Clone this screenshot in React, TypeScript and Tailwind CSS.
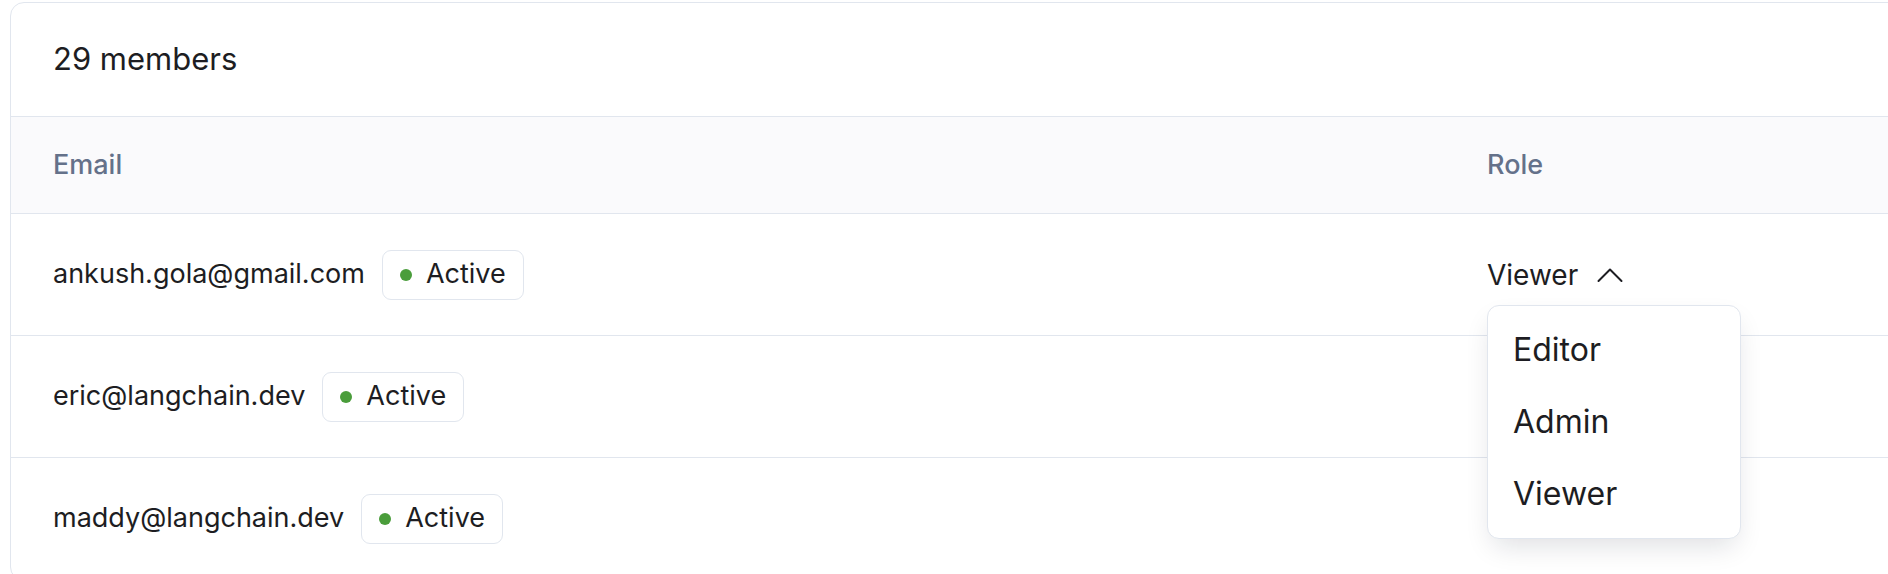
import { useState } from "react";

type Member = { email: string; status: "Active"; role: string };

const members: Member[] = [
  { email: "ankush.gola@gmail.com", status: "Active", role: "Viewer" },
  { email: "eric@langchain.dev", status: "Active", role: "Viewer" },
  { email: "maddy@langchain.dev", status: "Active", role: "Viewer" },
];

const roles = ["Editor", "Admin", "Viewer"];

function ChevronUp() {
  return (
    <svg width="26" height="16" viewBox="0 0 26 16" fill="none" className="text-[#1d1d22]">
      <polyline
        points="1.5,14 13,2.5 24.5,14"
        stroke="currentColor"
        strokeWidth="2"
        strokeLinecap="round"
        strokeLinejoin="round"
      />
    </svg>
  );
}

function StatusBadge({ label }: { label: string }) {
  return (
    <span className="inline-flex h-[50px] items-center gap-[14px] rounded-[9px] border-[1.5px] border-[#e1e6ee] pl-[17px] pr-[17px]">
      <span className="h-[12px] w-[12px] rounded-full bg-[#4a9d3b]" />
      <span>{label}</span>
    </span>
  );
}

/** Role cell: trigger + open menu. Rows under the open menu are hidden by it. */
function RoleSelect({ value, open }: { value: string; open: boolean }) {
  const [role] = useState(value);
  return (
    <div className="relative">
      <button type="button" className="flex items-center gap-[19px] text-[28px]">
        <span>{role}</span>
        {open && <ChevronUp />}
      </button>
      {open && (
        <div className="absolute left-0 top-[51px] z-10 w-[254px] rounded-[12px] border-[1.5px] border-[#e1e6ee] bg-white py-[8px] shadow-[0_12px_28px_-6px_rgba(15,23,42,0.14)]">
          {roles.map((r) => (
            <div key={r} className="flex h-[72px] items-center px-[25px] text-[32px]">
              {r}
            </div>
          ))}
        </div>
      )}
    </div>
  );
}

export default function App() {
  return (
    <div
      className="h-[574px] w-[1888px] overflow-hidden bg-white pl-[10px] pt-[2px] text-[#1d1d22]"
      style={{ fontFamily: "Inter, 'Noto Sans', sans-serif" }}
    >
      <div className="w-[1930px] rounded-[14px] border-[1.5px] border-[#e1e6ee] bg-white">
        <div className="flex h-[114px] items-center border-b-[1.5px] border-[#e1e6ee] px-[42px] text-[31px]">
          29 members
        </div>
        <div className="flex h-[97px] items-center border-b-[1.5px] border-[#e1e6ee] bg-[#fafafc] px-[42px] text-[27px] font-medium text-[#64718a]">
          <div className="w-[1434px]">Email</div>
          <div>Role</div>
        </div>
        {members.map((m, i) => (
          <div
            key={m.email}
            className="flex h-[122px] items-center border-b-[1.5px] border-[#e1e6ee] px-[42px] text-[27px]"
          >
            <div className="flex w-[1434px] items-center gap-[17px]">
              <span>{m.email}</span>
              <StatusBadge label={m.status} />
            </div>
            {i === 0 && <RoleSelect value={m.role} open />}
          </div>
        ))}
      </div>
    </div>
  );
}
